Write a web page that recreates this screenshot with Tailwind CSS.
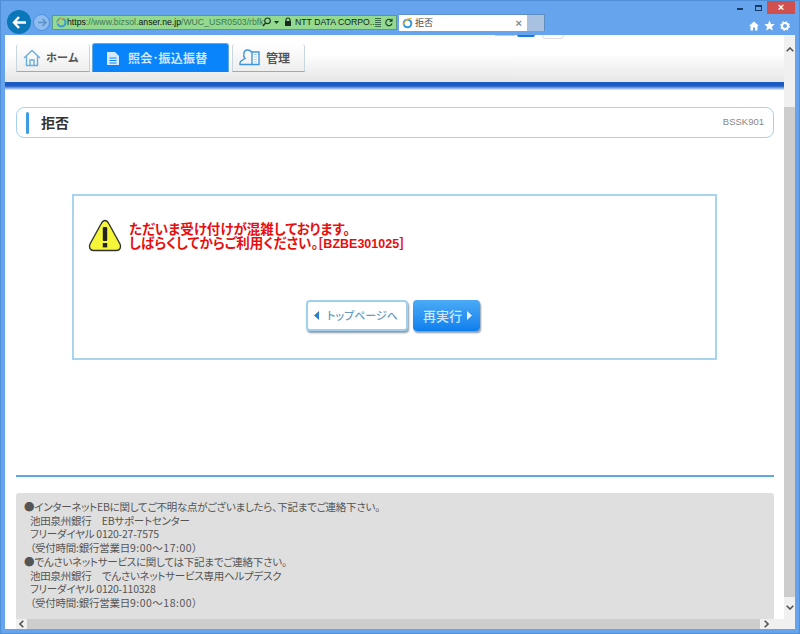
<!DOCTYPE html>
<html lang="ja"><head><meta charset="utf-8"><script src="https://cdn.jsdelivr.net/npm/@tailwindcss/browser@4"></script></head>
<body class="m-0 overflow-hidden">
<div class="w-[800px] h-[634px] flex flex-col bg-[#66a5ee] font-['Noto_Sans_CJK_JP','Liberation_Sans',sans-serif] text-[#333] border border-[#4f8fd8] overflow-hidden">
  <!-- window chrome -->
  <div class="h-[34px] shrink-0 relative flex items-end pl-[5px]">
    <div class="absolute right-[4px] top-0 flex items-start">
      <div class="w-[6px] h-[2px] mt-[7px] bg-[#1a3a66] mr-[12px]"></div>
      <div class="w-[7px] h-[6px] mt-[4px] border border-[#1a3a66] border-t-[2px] mr-[5px]"></div>
      <div class="w-[28px] h-[13px] bg-[#d0504f] text-white text-[11px] leading-[13px] text-center font-bold font-['Liberation_Sans']">×</div>
    </div>
    <div class="flex items-center h-[28px] mb-[-1px] gap-[2px] relative">
      <div class="w-[24px] h-[24px] rounded-full bg-[#0a78b8] flex items-center justify-center ml-[1px] shrink-0">
        <svg width="15" height="13" viewBox="0 0 15 13"><path d="M7 1 L2 6.5 L7 12 M2 6.5 H14" fill="none" stroke="#fff" stroke-width="2.4"/></svg>
      </div>
      <div class="w-[17px] h-[17px] rounded-full bg-[#8cbcf0] border border-[#4f8fd8] flex items-center justify-center shrink-0">
        <svg width="10" height="9" viewBox="0 0 10 9"><path d="M5.5 1 L9 4.5 L5.5 8 M9 4.5 H1" fill="none" stroke="#5f8fc8" stroke-width="1.4"/></svg>
      </div>
      <div class="w-[345px] h-[15px] bg-[#93d98f] border border-[#5a9a8a] flex items-center text-[8.7px] leading-none text-[#3f7a55] whitespace-nowrap overflow-hidden shrink-0 font-['Liberation_Sans']">
        <svg class="ml-[3px] shrink-0" width="11" height="11" viewBox="0 0 11 11"><circle cx="5.5" cy="5.5" r="4" fill="none" stroke="#3a96d8" stroke-width="2"/><path d="M1 7 Q5 -1 10 1" fill="none" stroke="#e8b838" stroke-width="1.2"/></svg>
        <span class="w-[193px] shrink-0"><span class="text-[#111]">https</span>://www.bizsol.<span class="text-[#111]">anser.ne.jp</span>/WUC_USR0503/rbfk</span>
        <svg class="ml-[2px] shrink-0" width="9" height="10" viewBox="0 0 9 10"><circle cx="5.5" cy="3.8" r="2.8" fill="none" stroke="#1a3a2a" stroke-width="1.2"/><path d="M3.5 6 L1 9" stroke="#1a3a2a" stroke-width="1.4"/></svg>
        <svg class="ml-[3px] shrink-0" width="5" height="3" viewBox="0 0 5 3"><path d="M0 0H5L2.5 3Z" fill="#1a3a2a"/></svg>
        <svg class="ml-[5px] shrink-0" width="8" height="10" viewBox="0 0 8 10"><path d="M2 4V3a2 2 0 0 1 4 0v1" fill="none" stroke="#1a2a22" stroke-width="1.1"/><rect x="1" y="4" width="6" height="5" fill="#1a2a22"/></svg>
        <span class="ml-[3px] text-[#12261c] w-[77px] shrink-0">NTT DATA CORPO...</span>
        <svg class="ml-[2px] shrink-0" width="8" height="9" viewBox="0 0 8 9"><path d="M1 .5H7M1 2.5H7M1 4.5H7M1 6.5H7M1 8.5H7" stroke="#3a6a4a" stroke-width="1"/></svg>
        <svg class="ml-[3px] shrink-0" width="8" height="9" viewBox="0 0 8 9"><path d="M6.8 3 A3.2 3.2 0 1 0 7 5.5 M7 .8V3.3H4.5" fill="none" stroke="#1a3a2a" stroke-width="1.1"/></svg>
      </div>
      <div class="w-[128px] h-[17px] bg-white border-t border-[#5f8fc0] flex items-center pl-[3px] pr-[5px] text-[9px] shrink-0 mt-[1px]">
        <svg class="shrink-0" width="11" height="11" viewBox="0 0 11 11"><circle cx="5.5" cy="5.5" r="3.8" fill="none" stroke="#3a96d8" stroke-width="2"/><path d="M1 7 Q5 -1 10 1" fill="none" stroke="#e8b838" stroke-width="1.2"/></svg>
        <span class="ml-[2px] text-[#444]">拒否</span>
        <span class="ml-auto text-[#888] text-[11px] font-['Liberation_Sans'] font-bold leading-none">×</span>
      </div>
      <div class="w-[18px] h-[17px] bg-[#a9c1e0] border-t border-r border-[#5f8fc0] shrink-0 mt-[1px] ml-[-2px]"></div>
    </div>
    <div class="absolute right-[9px] bottom-[4px] flex items-center gap-[5px]">
      <svg width="10" height="10" viewBox="0 0 10 10"><path d="M5 .5 L10 5 H8.5 V9.5 H6 V6.5 H4 V9.5 H1.5 V5 H0Z" fill="#fff"/></svg>
      <svg width="11" height="11" viewBox="0 0 11 11"><path d="M5.5 .5 L7 4 L10.8 4.2 L7.9 6.7 L8.9 10.5 L5.5 8.4 L2.1 10.5 L3.1 6.7 L.2 4.2 L4 4Z" fill="#fff"/></svg>
      <svg width="10" height="10" viewBox="0 0 10 10"><circle cx="5" cy="5" r="3" fill="none" stroke="#fff" stroke-width="2"/><circle cx="5" cy="5" r="4.3" fill="none" stroke="#fff" stroke-width="1.2" stroke-dasharray="1.5 1.9"/></svg>
    </div>
  </div>
  <!-- viewport -->
  <div class="flex-1 mx-[4px] mb-[4px] bg-white flex flex-col relative min-h-0">
    <div class="absolute left-[490px] top-0 flex items-start gap-[2px]">
      <div class="w-[20px] h-[1px] bg-[#b8cfe8]"></div>
      <div class="w-[18px] h-[2px] bg-[#1b7cd8] rounded-b"></div>
      <div class="w-[22px] h-[4px] ml-[5px] border border-t-0 border-[#ddd] rounded-b"></div>
    </div>
    <div class="flex-1 flex min-h-0">
      <div class="flex-1 min-w-0 flex flex-col">
        <!-- nav -->
        <div class="h-[47px] shrink-0 bg-gradient-to-b from-white from-40% to-[#e6e6e6] flex items-end pl-[11px] gap-[2px] pb-[10px]">
          <div class="w-[74px] h-[28px] bg-gradient-to-b from-white to-[#eeeeee] border border-[#c8d6e0] border-b-[#7fb4d8] border-t-0 rounded-t-[3px] flex items-center pl-[6px] text-[11px] font-bold text-[#555] shrink-0">
            <svg class="shrink-0" width="18" height="18" viewBox="0 0 18 18"><path d="M1 9 L9 1.5 L17 9 M3.5 7.5 V16.5 H14.5 V7.5 M7 16.5 V11 H11 V16.5" fill="none" stroke="#6aaee0" stroke-width="1.4"/></svg>
            <span class="ml-[5px]">ホーム</span>
          </div>
          <div class="w-[137px] h-[29px] bg-[#0a84fb] border border-[#62a8dc] border-b-0 rounded-t-[3px] flex items-center pl-[13px] text-[12px] font-bold text-[#cfe6ff] shrink-0">
            <svg class="shrink-0" width="14" height="15" viewBox="0 0 14 15"><path d="M1 1 H9 L13 5 V14 H1Z" fill="#d6eaff"/><path d="M3.5 7 H10.5 M3.5 9.5 H10.5 M3.5 12 H10.5" stroke="#0a84fb" stroke-width="1.2"/></svg>
            <span class="ml-[8px] tracking-[0.2px]">照会･振込振替</span>
          </div>
          <div class="w-[73px] h-[28px] ml-[1px] bg-gradient-to-b from-white to-[#eeeeee] border border-[#c8d6e0] border-b-[#7fb4d8] border-t-0 rounded-t-[3px] flex items-center pl-[6px] text-[12px] font-bold text-[#555] shrink-0">
            <svg class="shrink-0" width="21" height="17" viewBox="0 0 21 17"><path d="M13 15.5 H1 V13.5 C1 11.5 4 11 6 9.5 C4 7.5 4 1 8.5 1 C10.5 1 12 2 12.5 3.5" fill="none" stroke="#3f95dd" stroke-width="1.4"/><path d="M13 15.5 H20 V3 H13Z" fill="#fff" stroke="#3f95dd" stroke-width="1.4"/><path d="M15 5.5 H18 M15 8 H18 M15 10.5 H18 M15 13 H18" stroke="#a8cde8" stroke-width="1.2"/></svg>
            <span class="ml-[6px]">管理</span>
          </div>
        </div>
        <div class="h-[8px] shrink-0 bg-gradient-to-b from-[#1a5cc4] from-50% to-[#e4effb]"></div>
        <!-- title -->
        <div class="mt-[17px] ml-[11px] mr-[10px] h-[31px] shrink-0 border border-[#a6d2ee] rounded-[8px] flex items-center pl-[9px] pr-[9px]">
          <div class="w-[3px] h-[22px] bg-[#3a9ee0] rounded-sm shrink-0"></div>
          <h1 class="ml-[12px] text-[14px] font-bold text-[#333]">拒否</h1>
          <span class="ml-auto text-[9.5px] text-[#888] font-['Liberation_Sans']">BSSK901</span>
        </div>
        <!-- error box -->
        <div class="mt-[56px] ml-[67px] w-[645px] h-[166px] shrink-0 border-2 border-[#a8d4ee] flex flex-col pl-[14px]">
          <div class="mt-[23px] flex items-start">
            <svg class="shrink-0" width="34" height="33" viewBox="0 0 34 33"><path d="M17 1.5 C19 1.5 20 3 21 5 L32 25 C33.5 28 32 31.5 28.5 31.5 H5.5 C2 31.5 .5 28 2 25 L13 5 C14 3 15 1.5 17 1.5Z" fill="#f5f53a" stroke="#333" stroke-width="1.4"/><rect x="14.8" y="8" width="4.4" height="14" rx="1" fill="#222"/><rect x="14.8" y="24" width="4.4" height="4.4" fill="#222"/></svg>
            <p class="ml-[7px] mt-[2px] text-[13.5px] leading-[14px] font-bold text-[#e60f0f] whitespace-nowrap [font-feature-settings:'palt']">ただいま受け付けが混雑しております。<br>しばらくしてからご利用ください。[<span class="font-['Liberation_Sans'] text-[12.5px]">BZBE301025</span>]</p>
          </div>
          <div class="mt-[48px] ml-[218px] flex gap-[5px]">
            <div class="w-[102px] h-[31px] bg-white border-2 border-[#a0d0ec] rounded-[4px] shadow-[1px_2px_2px_#8a9aa8] flex items-center pl-[6px] text-[11px] text-[#6a9cc0] [font-feature-settings:'palt']">
              <svg class="shrink-0" width="6" height="9" viewBox="0 0 6 9"><path d="M5 0 V9 L0 4.5Z" fill="#2a80c0"/></svg>
              <span class="ml-[7px] font-medium whitespace-nowrap">トップページへ</span>
            </div>
            <div class="w-[67px] h-[31px] bg-gradient-to-b from-[#4aaaf5] to-[#0a7fee] rounded-[4px] shadow-[1px_2px_2px_#8a9aa8] flex items-center pl-[10px] text-[13px] font-medium text-[#cfe6ff]">
              <span class="whitespace-nowrap">再実行</span>
              <svg class="ml-[5px] shrink-0" width="6" height="9" viewBox="0 0 6 9"><path d="M0 0 V9 L5 4.5Z" fill="#e8f4ff"/></svg>
            </div>
          </div>
        </div>
        <!-- footer -->
        <div class="mt-[115px] ml-[11px] mr-[10px] h-[2px] shrink-0 bg-[#5aaade]"></div>
        <div class="mt-[16px] ml-[11px] mr-[10px] flex-1 min-h-0 bg-[#dfdfdf] rounded-t-[3px] pl-[8px] pt-[7px] text-[10.5px] leading-[13.7px] tracking-[-0.25px] text-[#555] whitespace-nowrap [font-feature-settings:'palt']">
          <p>●インターネットEBに関してご不明な点がございましたら、下記までご連絡下さい。</p>
          <p class="pl-[6px]">池田泉州銀行　EBサポートセンター</p>
          <p class="pl-[6px]">フリーダイヤル 0120-27-7575</p>
          <p class="pl-[6px]">（受付時間:銀行営業日<span class="tracking-[0.5px]">9:00～17:00</span>）</p>
          <p>●でんさいネットサービスに関しては下記までご連絡下さい。</p>
          <p class="pl-[6px]">池田泉州銀行　でんさいネットサービス専用ヘルプデスク</p>
          <p class="pl-[6px]">フリーダイヤル 0120-110328</p>
          <p class="pl-[6px]">（受付時間:銀行営業日<span class="tracking-[0.5px]">9:00～18:00</span>）</p>
        </div>
      </div>
      <!-- vertical scrollbar -->
      <div class="w-[11px] shrink-0 bg-[#f0f0f0] flex flex-col">
        <div class="h-[72px] flex justify-center pt-[12px]"><svg width="8" height="5" viewBox="0 0 8 5"><path d="M.7 4.3 L4 1 L7.3 4.3" fill="none" stroke="#555" stroke-width="1.6"/></svg></div>
        <div class="flex-1 bg-[#cdcdcd]"></div>
        <div class="h-[22px] flex justify-center pt-[8px]"><svg width="8" height="5" viewBox="0 0 8 5"><path d="M.7 .7 L4 4 L7.3 .7" fill="none" stroke="#555" stroke-width="1.6"/></svg></div>
      </div>
    </div>
    <!-- horizontal scrollbar -->
    <div class="h-[10px] shrink-0 flex bg-[#f0f0f0]">
      <div class="w-[11px] bg-white"></div>
      <div class="w-[11px] flex items-center justify-center"><svg width="5" height="8" viewBox="0 0 5 8"><path d="M4.3 .7 L1 4 L4.3 7.3" fill="none" stroke="#555" stroke-width="1.6"/></svg></div>
      <div class="w-[733px] bg-[#cdcdcd]"></div>
      <div class="w-[13px] flex items-center justify-center"><svg width="5" height="8" viewBox="0 0 5 8"><path d="M.7 .7 L4 4 L.7 7.3" fill="none" stroke="#555" stroke-width="1.6"/></svg></div>
    </div>
  </div>
</div>
</body></html>
